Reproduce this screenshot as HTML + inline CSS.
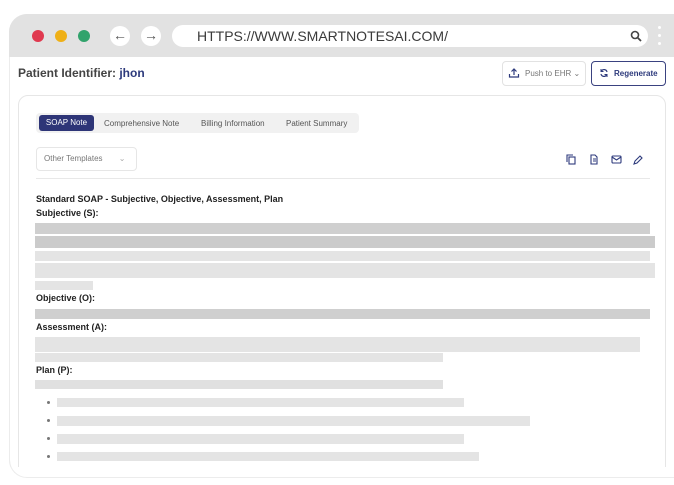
<!DOCTYPE html>
<html style="width:674px;height:485px;overflow:hidden"><head><meta charset="utf-8"><style>
*{margin:0;padding:0;box-sizing:border-box}
body{width:674px;height:485px;background:#fff;font-family:"Liberation Sans",sans-serif;position:relative;overflow:hidden}
.a{position:absolute}
.frame{left:9px;top:14px;width:680px;height:464px;border:1px solid #ececec;border-radius:18px 0 0 18px}
.bar{left:9px;top:14px;width:670px;height:43px;background:#e2e2e2;border-radius:18px 0 0 0}
.dot{width:12px;height:12px;border-radius:50%;top:30px}
.nav{width:20px;height:20px;border-radius:50%;background:#fff;top:26px;font-size:14px;color:#555;text-align:center;line-height:18px}
.url{left:172px;top:25px;width:476px;height:22px;background:#fff;border-radius:11px;font-size:14px;color:#3a3a3a;padding-left:25px;line-height:22px}
.b{background:#e4e4e4;left:35px}
.d{background:#cfcfcf;left:35px}
.h{font-size:9px;font-weight:bold;color:#222;left:36px}
.bul{left:47px;width:3px;height:3px;border-radius:50%;background:#777}
</style></head><body>
<div class="a frame"></div>
<div class="a bar"></div>
<div class="a dot" style="left:32px;background:#e0394f"></div>
<div class="a dot" style="left:55px;background:#efb017"></div>
<div class="a dot" style="left:78px;background:#31a36c"></div>
<div class="a nav" style="left:110px">&#8592;</div>
<div class="a nav" style="left:141px">&#8594;</div>
<div class="a url">HTTPS://WWW.SMARTNOTESAI.COM/</div>
<svg class="a" style="left:630px;top:30px" width="12" height="12" viewBox="0 0 12 12"><circle cx="5" cy="5" r="3.5" fill="none" stroke="#444" stroke-width="1.6"/><path d="M7.5 7.5L11 11" stroke="#444" stroke-width="1.8"/></svg>
<div class="a" style="left:658px;top:26px;width:3px;height:3px;border-radius:50%;background:#fff"></div>
<div class="a" style="left:658px;top:34px;width:3px;height:3px;border-radius:50%;background:#fff"></div>
<div class="a" style="left:658px;top:42px;width:3px;height:3px;border-radius:50%;background:#fff"></div>

<div class="a" style="left:18px;top:66px;font-size:12px;font-weight:bold;color:#444">Patient Identifier: <span style="color:#2d3a7c">jhon</span></div>
<div class="a" style="left:502px;top:61px;width:84px;height:25px;border:1px solid #e2e2e2;border-radius:4px;font-size:8px;color:#777;line-height:23px;padding-left:22px">Push to EHR &#8964;</div>
<svg class="a" style="left:508px;top:67px" width="12" height="12" viewBox="0 0 12 12"><path d="M6 8V2M3.5 4.5L6 2l2.5 2.5M1.5 7v3h9V7" fill="none" stroke="#2d3a7c" stroke-width="1.2"/></svg>
<div class="a" style="left:591px;top:61px;width:75px;height:25px;border:1px solid #3a4280;border-radius:4px;font-size:8px;font-weight:bold;color:#2d3a7c;line-height:23px;padding-left:22px">Regenerate</div>
<svg class="a" style="left:599px;top:68px" width="10" height="10" viewBox="0 0 10 10"><path d="M8 4A3 3 0 0 0 2.5 3M2 6a3 3 0 0 0 5.5 1" fill="none" stroke="#2d3a7c" stroke-width="1.2"/><path d="M2 1v2.5h2.5M8 9V6.5H5.5" fill="none" stroke="#2d3a7c" stroke-width="1"/></svg>

<div class="a" style="left:18px;top:95px;width:648px;height:390px;border:1px solid #e6e6e6;border-radius:10px"></div>
<div class="a" style="left:36px;top:113px;width:323px;height:20px;background:#f1f1f1;border-radius:4px"></div>
<div class="a" style="left:39px;top:115px;width:55px;height:16px;background:#2e3577;border-radius:3px;color:#fff;font-size:8px;line-height:16px;text-align:center">SOAP Note</div>
<div class="a" style="left:104px;top:119px;font-size:8px;color:#555">Comprehensive Note</div>
<div class="a" style="left:201px;top:119px;font-size:8px;color:#555">Billing Information</div>
<div class="a" style="left:286px;top:119px;font-size:8px;color:#555">Patient Summary</div>

<div class="a" style="left:36px;top:147px;width:101px;height:24px;border:1px solid #e6e6e6;border-radius:4px;font-size:8px;color:#777;line-height:22px;padding-left:7px">Other Templates <span style="margin-left:14px;color:#aaa">&#8964;</span></div>
<svg class="a" style="left:566px;top:154px" width="80" height="11" viewBox="0 0 80 11"><g fill="none" stroke="#2d3a7c" stroke-width="1.1"><rect x="3" y="3" width="6" height="7"/><path d="M1 8V1h6"/><path d="M25 1h4l2 2v7h-6z M27 5h3M27 7h3"/><rect x="46" y="2" width="9" height="7" rx="1"/><path d="M46 3l4.5 3 4.5-3"/><path d="M68 10l1-3 5-5 2 2-5 5z"/></g></svg>
<div class="a" style="left:36px;top:178px;width:614px;height:1px;background:#e8e8e8"></div>

<div class="a h" style="top:194px">Standard SOAP - Subjective, Objective, Assessment, Plan</div>
<div class="a h" style="top:208px">Subjective (S):</div>
<div class="a d" style="top:223px;width:615px;height:11px"></div>
<div class="a d" style="top:236px;width:620px;height:12px;background:#cbcbcb"></div>
<div class="a b" style="top:251px;width:615px;height:10px"></div>
<div class="a b" style="top:263px;width:620px;height:15px"></div>
<div class="a b" style="top:281px;width:58px;height:9px"></div>
<div class="a h" style="top:293px">Objective (O):</div>
<div class="a d" style="top:309px;width:615px;height:10px"></div>
<div class="a h" style="top:322px">Assessment (A):</div>
<div class="a b" style="top:337px;width:605px;height:15px"></div>
<div class="a b" style="top:353px;width:408px;height:9px"></div>
<div class="a h" style="top:365px">Plan (P):</div>
<div class="a b" style="top:380px;width:408px;height:9px;background:#e0e0e0"></div>
<div class="a bul" style="top:401px"></div><div class="a b" style="left:57px;top:398px;width:407px;height:9px"></div>
<div class="a bul" style="top:419px"></div><div class="a b" style="left:57px;top:416px;width:473px;height:10px"></div>
<div class="a bul" style="top:437px"></div><div class="a b" style="left:57px;top:434px;width:407px;height:10px"></div>
<div class="a bul" style="top:455px"></div><div class="a b" style="left:57px;top:452px;width:422px;height:9px"></div>
<div class="a" style="left:0;top:467px;width:674px;height:18px;background:#fff"></div>
<div class="a" style="left:9px;top:440px;width:40px;height:38px;border-left:1px solid #ececec;border-bottom:1px solid #ececec;border-radius:0 0 0 18px"></div>
<div class="a" style="left:40px;top:477px;width:640px;height:1px;background:#ececec"></div>
</body></html>
